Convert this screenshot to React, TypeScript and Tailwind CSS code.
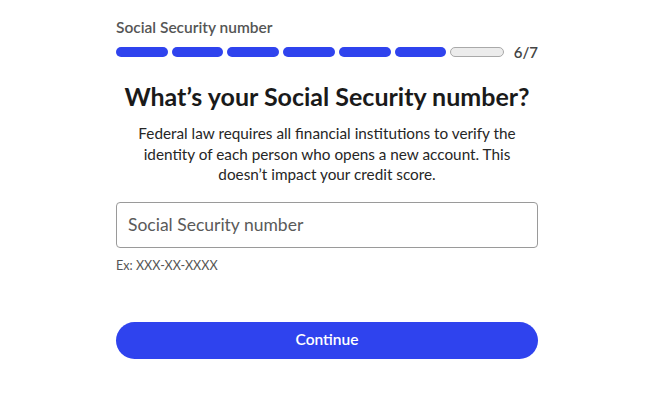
export default function App() {
  const steps = 7
  const current = 6

  return (
    <div className="min-h-[410px] w-full bg-white font-['Lato','Noto_Sans',sans-serif] text-[#1c1c1c]">
      <div className="ml-[116px] flex w-[422px] flex-col pt-[17px]">
        {/* Step label + progress */}
        <div className="text-[15.5px] font-semibold leading-5 text-[#555]">Social Security number</div>
        <div className="mt-[5px] flex items-center justify-between">
          <div className="flex w-[388px] gap-[4px]">
            {Array.from({ length: steps }).map((_, i) => (
              <div
                key={i}
                className={
                  i < current
                    ? 'h-[10px] flex-1 rounded-full bg-[#2f43ee]'
                    : 'h-[10px] flex-1 rounded-full border border-[#a9a9a9] bg-[#ececec]'
                }
              />
            ))}
          </div>
          <span className="text-[15px] font-semibold leading-5 text-[#444]">6/7</span>
        </div>

        {/* Heading */}
        <h1 className="mt-[18px] text-center text-[25px] font-bold leading-8 text-[#1a1a1a]">
          What’s your Social Security number?
        </h1>
        <p className="mx-auto mt-[11px] w-[400px] text-center text-[15.3px] leading-[20.5px] text-[#262626]">
          Federal law requires all financial institutions to verify the identity of each person who opens a new account. This doesn’t impact your credit score.
        </p>

        {/* Input */}
        <input
          placeholder="Social Security number"
          className="mt-[17px] h-[46px] w-full rounded-[4px] border border-[#9a9a9a] px-[11px] text-[17.5px] text-[#1a1a1a] outline-none placeholder:text-[#5a5a5a]"
        />
        <div className="mt-[10px] text-[12.6px] leading-4 text-[#555]">Ex: XXX-XX-XXXX</div>

        {/* Action */}
        <button className="mt-[48px] h-[37px] w-full rounded-full bg-[#2f43ee] text-[15.5px] font-semibold text-white">
          Continue
        </button>
      </div>
    </div>
  )
}
